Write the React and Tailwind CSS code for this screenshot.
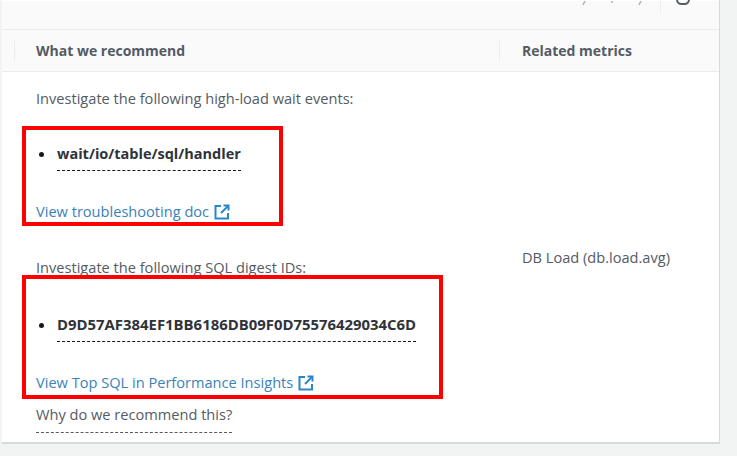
const NewTab = () => (
  <svg className="ml-[5px] inline-block h-4 w-4 text-[#2b86c5]" viewBox="0 0 16 16" fill="none" stroke="currentColor" strokeWidth="2">
    <path d="M7 2H1.500v12.500H14V9" />
    <path d="M9.500 1.500H14.500V6.500" />
    <path d="M14 2L7 9" />
  </svg>
)

const WaitItem = ({ children, size }) => (
  <div className="flex items-start pl-[3px]">
    <span className="mt-[8px] h-[5px] w-[5px] shrink-0 rounded-full bg-[#16191f]" />
    <span className={`ml-[13px] border-b border-dashed border-[#16191f] pb-[7px] leading-[19px] font-bold text-[#2e3339] ${size}`}>
      {children}
    </span>
  </div>
)

const App = () => {
  return (
    <div className="relative h-[456px] w-[737px] overflow-hidden bg-[#f2f3f3] font-['Open_Sans',sans-serif] text-[14.600px] text-[#545b64]">
      <div className="ml-[2px] flex h-[444px] w-[718px] flex-col border-r border-b-2 border-[#d5dbdb] bg-white">
        {/* table toolbar, mostly cut off by the crop */}
        <div className="relative mt-px h-[29px] border-b border-[#eaeded] bg-[#fafafa]">
          <svg className="absolute top-0 left-[578px] h-[5px] w-[64px] text-[#aab7b8]" viewBox="0 0 64 5" fill="none" stroke="currentColor" strokeWidth="1.500">
            <path d="M5 0L3 4" />
            <path d="M59 4L61 0" />
            <path d="M32 0v2" />
          </svg>
          <span className="absolute top-0 left-[658px] h-3 w-px bg-[#eaeded]" />
          <span className="absolute top-[-7px] left-[674px] h-[11px] w-[14px] rounded-full border-2 border-[#545b64]" />
        </div>

        <div className="flex h-[42px] items-center border-b border-[#eaeded] bg-[#fafafa] text-[14px] font-bold">
          <div className="ml-[12px] flex h-[20px] w-[485px] items-center border-l border-[#eaeded] pl-[21px]">What we recommend</div>
          <div className="flex h-[20px] items-center border-l border-[#eaeded] pl-[22px]">Related metrics</div>
        </div>

        <div className="flex flex-1">
          <div className="w-[497px] pl-[34px]">
            <p className="mt-[17px] leading-[19px]">Investigate the following high-load wait events:</p>
            <div className="mt-[36px]">
              <WaitItem size="text-[14.500px]">wait/io/table/sql/handler</WaitItem>
            </div>
            <a className="mt-[31px] flex items-center leading-[19px] text-[#3b82b8]">View troubleshooting doc<NewTab /></a>
            <p className="mt-[37px] leading-[19px]">Investigate the following SQL digest IDs:</p>
            <div className="mt-[38px]">
              <WaitItem size="text-[14.900px]">D9D57AF384EF1BB6186DB09F0D75576429034C6D</WaitItem>
            </div>
            <a className="mt-[31px] flex items-center leading-[19px] text-[#3b82b8]">View Top SQL in Performance Insights<NewTab /></a>
            <p className="mt-[13px] w-fit border-b border-dashed border-[#545b64] pb-[8px] leading-[19px]">Why do we recommend this?</p>
          </div>
          <div className="flex flex-1 items-center pt-[2px] pl-[23px]">DB Load (db.load.avg)</div>
        </div>
      </div>

      {/* red callouts drawn over the screenshot */}
      <div className="absolute top-[126px] left-[22px] h-[100px] w-[261px] border-[4px] border-[#fe0000]" />
      <div className="absolute top-[275px] left-[22px] h-[124px] w-[421px] border-[4px] border-[#fe0000]" />
    </div>
  )
}

export default App
